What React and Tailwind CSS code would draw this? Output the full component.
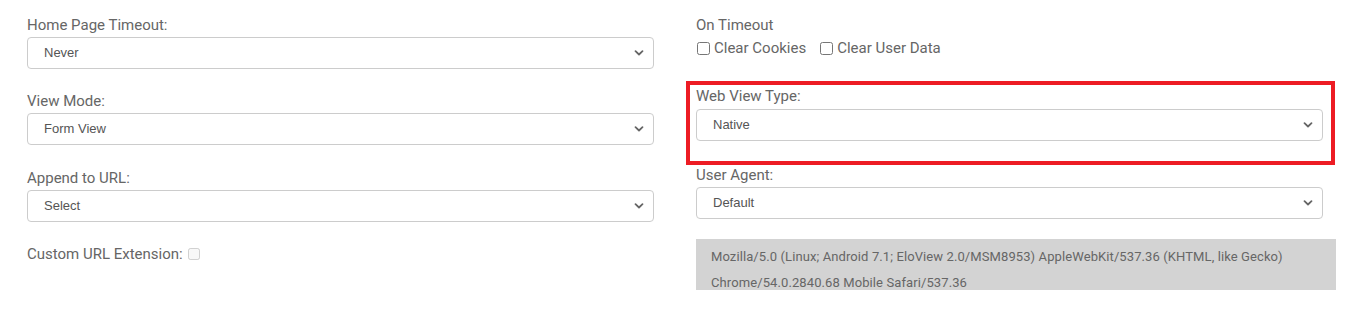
import React from 'react'

const font = { fontFamily: 'Roboto, "Liberation Sans", sans-serif' }

const Chevron = () => (
  <svg className="pointer-events-none absolute right-[10px] top-1/2 -translate-y-1/2" width="10" height="7" viewBox="0 0 10 7" fill="none">
    <path d="M1.5 1.7 5 5 8.5 1.7" stroke="#666" strokeWidth="1.8" strokeLinecap="round" strokeLinejoin="round" />
  </svg>
)

const SelectBox = ({ value, options }) => (
  <div className="relative w-[627px]">
    <select
      defaultValue={value}
      className="block h-[32px] w-full appearance-none rounded-[4px] border border-[#cccccc] bg-white pl-[16px] pr-8 text-[13px] text-[#555555] outline-none"
      style={{ fontFamily: '"Liberation Sans", Arial, sans-serif' }}
    >
      {options.map((o) => (
        <option key={o}>{o}</option>
      ))}
    </select>
    <Chevron />
  </div>
)

const Field = ({ label, value, options, className = '', gap = 'mb-[2px]' }) => (
  <div className={className}>
    <label className={`${gap} block text-[15px] leading-[20px] text-[#666666]`}>{label}</label>
    <SelectBox value={value} options={options} />
  </div>
)

const App = () => {
  return (
    <div className="h-[315px] w-full bg-white" style={font}>
      <div className="flex pl-[27px] pt-[15px]">
        {/* left column */}
        <div className="w-[627px]">
          <Field label="Home Page Timeout:" value="Never" options={['Never', '1 Minute', '5 Minutes', '10 Minutes']} className="mb-[22px]" />
          <Field label="View Mode:" value="Form View" options={['Form View', 'List View']} className="mb-[23px]" />
          <Field label="Append to URL:" value="Select" options={['Select', 'Device ID', 'Serial Number']} className="mb-[22px]" />
          <div className="flex items-center text-[15px] leading-[20px] text-[#666666]">
            <span>Custom URL Extension:</span>
            <input type="checkbox" disabled className="ml-[5px] h-[12px] w-[12px] rounded-[2px] border border-[#d6d6d6] bg-[#f7f7f7]" />
          </div>
        </div>

        {/* right column */}
        <div className="ml-[42px] w-[640px]">
          <div className="text-[15px] leading-[20px] text-[#666666]">On Timeout</div>
          <div className="mt-[3px] flex items-center text-[15px] leading-[20px] text-[#666666]">
            <label className="flex items-center">
              <input type="checkbox" className="mr-[4px] ml-[1px] h-[13px] w-[13px] accent-[#555555]" />
              Clear Cookies
            </label>
            <label className="ml-[14px] flex items-center">
              <input type="checkbox" className="mr-[4px] h-[13px] w-[13px] accent-[#555555]" />
              Clear User Data
            </label>
          </div>

          <div className="-ml-[10px] mt-[23px] w-[649px] border-[4px] border-[#ed1c24] pl-[6px] pb-[20px] pt-[1px]">
            <Field label="Web View Type:" value="Native" options={['Native', 'Chromium']} gap="mb-[3px]" />
          </div>

          <Field label="User Agent:" value="Default" options={['Default', 'Custom']} />

          <div className="mt-[20px] h-[51px] w-[640px] overflow-hidden bg-[#d3d3d3] pl-[15px] pr-4 pt-[5px] text-[13px] leading-[26px] tracking-[0.1px] text-[#666666]">
            Mozilla/5.0 (Linux; Android 7.1; EloView 2.0/MSM8953) AppleWebKit/537.36 (KHTML, like Gecko) Chrome/54.0.2840.68 Mobile Safari/537.36
          </div>
        </div>
      </div>
    </div>
  )
}

export default App
